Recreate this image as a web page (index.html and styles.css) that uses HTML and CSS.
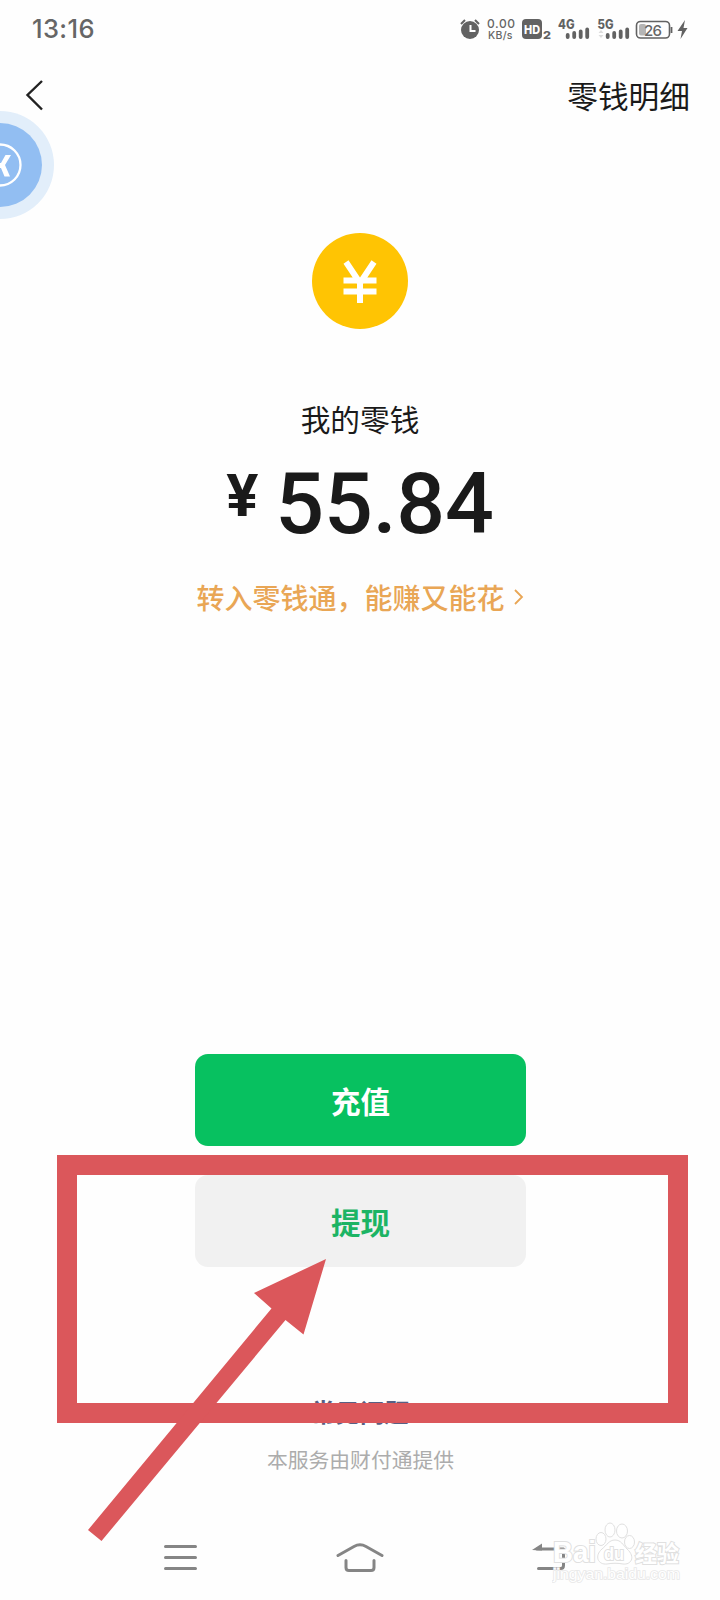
FILE: index.html
```html
<!DOCTYPE html>
<html lang="zh-CN">
<head>
<meta charset="utf-8">
<title>我的零钱</title>
<link rel="stylesheet" href="styles.css">
</head>
<body>
<div class="screen">
  <div class="status">
    <span class="time">13:16</span>
    <svg class="status-icons" width="240" height="36" viewBox="0 0 240 36">
      <circle cx="20" cy="20" r="9" fill="#626262"/>
      <path d="M11 14l4-4M29 14l-4-4" stroke="#626262" stroke-width="2"/>
      <path d="M20.500 15v6h5" fill="none" stroke="#fff" stroke-width="2"/>
      <text x="37" y="18" class="tiny" font-size="12" textLength="28">0.00</text>
      <text x="38" y="28.500" class="tiny" font-size="10.500" textLength="24.500">KB/s</text>
      <rect x="72" y="9" width="20" height="20" rx="4" fill="#626262"/>
      <text x="74" y="23.500" fill="#fff" class="heavy" font-size="12" textLength="16" lengthAdjust="spacingAndGlyphs">HD</text>
      <text x="93" y="28.500" class="heavy" font-size="11" textLength="8" lengthAdjust="spacingAndGlyphs">2</text>
      <text x="108" y="18.500" class="heavy" font-size="12.500" textLength="16.500" lengthAdjust="spacingAndGlyphs">4G</text>
      <text x="147.500" y="18.500" class="heavy" font-size="12.500" textLength="16" lengthAdjust="spacingAndGlyphs">5G</text>
      <path d="M117.700 25v2M124.200 23v4M130.700 21.500v5.500M137.200 19.500v7.500M157.700 25v2M164.200 23v4M170.700 21.500v5.500M177.200 19.500v7.500" stroke="#626262" stroke-width="3.800" stroke-linecap="round"/>
      <path d="M148.500 23l2.500-3 2.500 3zM148.500 25l2.500 3 2.500-3z" fill="#ddd"/>
      <rect x="186.500" y="11.500" width="33" height="16.500" rx="4" fill="none" stroke="#626262" stroke-width="1.600"/>
      <rect x="189" y="14" width="7" height="11.500" rx="2" fill="#b5b5b5"/>
      <path d="M221.500 17v6" stroke="#626262" stroke-width="1.800"/>
      <text x="194" y="25.500" class="tiny" font-size="15" textLength="18">26</text>
      <path d="M235 10l-7.500 11h4.500l-1.500 8 7-11h-4z" fill="#626262"/>
    </svg>
  </div>
  <div class="header">
    <svg width="20" height="34" viewBox="0 0 20 34"><path d="M17 3 2.500 17 17 31.500" fill="none" stroke="#222" stroke-width="2.400"/></svg>
    <span>零钱明细</span>
  </div>
  <div class="balance">
    <svg class="coin" width="98" height="98" viewBox="0 0 98 98">
      <circle cx="49" cy="49" r="48" fill="#ffc403"/>
      <path d="M35 30 49 51 63 30M49 49v22M32.500 48.500h33M32.500 59.500h33" fill="none" stroke="#fff" stroke-width="6"/>
    </svg>
    <div class="label">我的零钱</div>
    <div class="amount"><span class="yen">¥</span><span class="num">55.84</span></div>
    <div class="promo">转入零钱通，能赚又能花<svg width="12" height="18" viewBox="0 0 12 18"><path d="M2 2l7 7-7 7" fill="none" stroke="#e9a655" stroke-width="1.800"/></svg></div>
  </div>
  <div class="actions">
    <div class="btn primary">充值</div>
    <div class="btn">提现</div>
  </div>
  <div class="foot">
    <div class="faq">常见问题</div>
    <div class="provider">本服务由财付通提供</div>
  </div>
  <div class="nav">
    <svg width="36" height="30" viewBox="0 0 36 30"><path d="M3.500 4.500h30M3.500 15.500h30M3.500 26.500h30" class="navline"/></svg>
    <svg class="home" width="50" height="34" viewBox="0 0 50 34"><path d="M3 13.500 19 4.500Q25 1.200 31 4.500L47 13.500M11 18.500v7q0 3 3 3h22q3 0 3-3v-7" class="navline"/></svg>
    <svg width="38" height="34" viewBox="0 0 38 34"><path d="M6 7h26.500v16.500q0 3-3 3H7.500" class="navline"/><path d="M1 8 11 1.500v7z" fill="#858585"/></svg>
  </div>

  <svg class="bubble" width="56" height="112" viewBox="0 0 56 112">
    <circle cx="0" cy="56" r="54" fill="#e2eefa"/>
    <circle cx="0" cy="56" r="42" fill="#92bef2"/>
    <circle cx="0" cy="56" r="20.500" fill="none" stroke="#fff" stroke-width="2.300"/>
    <path d="M-1 54h2L5.500 46H11L5 56l5 11.500H4.500L1 59h-2z" fill="#fff"/>
  </svg>

  <svg class="watermark" width="134" height="66" viewBox="0 0 134 66">
    <g fill="#fff" stroke="#e0e0e0" stroke-width="1">
      <text x="1" y="41" class="logo" font-size="29" textLength="43" lengthAdjust="spacingAndGlyphs">Bai</text>
      <ellipse cx="49" cy="18" rx="5" ry="6.500"/><ellipse cx="58" cy="9" rx="5" ry="7"/><ellipse cx="70" cy="10" rx="5.500" ry="7"/><ellipse cx="77.500" cy="21" rx="5" ry="6.500"/>
      <path d="M63 19c6 0 8 5 12 9 9 8 4 16-4 15-5-1-11-1-16 0-9 1-13-8-5-15 5-4 7-9 13-9z"/>
      <text x="52" y="39" class="logo" font-size="18" textLength="20" lengthAdjust="spacingAndGlyphs">du</text>
      <text x="83" y="40.500" class="logo" font-size="23" textLength="44" lengthAdjust="spacingAndGlyphs">经验</text>
    </g>
    <text x="1" y="58" class="site" font-size="15" textLength="127" lengthAdjust="spacingAndGlyphs">jingyan.baidu.com</text>
  </svg>

  <div class="frame"></div>
  <svg class="arrow" width="250" height="290" viewBox="0 0 250 290">
    <path d="M246 9 223.500 84.500 205.500 70 21.500 291 8 280 191.500 58.500 174 43z" fill="#db575b"/>
  </svg>
</div>
</body>
</html>
```
FILE: styles.css
```css
* { box-sizing: border-box; }
body { margin: 0; background: #fefefe; }
svg { display: block; flex: none; }
.screen {
  position: relative; width: 720px; height: 1600px; overflow: hidden;
  display: flex; flex-direction: column; background: #fefefe; color: #1a1a1a;
  font-family: "Noto Sans CJK SC", sans-serif; white-space: nowrap;
}
.status { height: 60px; padding: 11px 30px 0 32px; display: flex; justify-content: space-between; }
.time { font: 500 25.5px/36px Inter, sans-serif; letter-spacing: .4px; color: #666; }
.status-icons { margin-top: -1px; }
.tiny { font-family: Inter, sans-serif; font-weight: 500; fill: #666; }
.heavy { font-family: Inter, sans-serif; font-weight: 800; }
.heavy:not([fill]) { fill: #626262; }
.header {
  height: 70px; padding: 0 30px 0 25px; display: flex; align-items: center;
  justify-content: space-between; font-size: 30.7px; line-height: 40px;
}
.balance { display: flex; flex-direction: column; align-items: center; padding-top: 102px; }
.coin { margin-right: 1px; }
.label { margin: 67px 0 0 0; font-size: 29.7px; line-height: 44px; }
.amount { display: flex; align-items: flex-start; margin: 20px 0 0 0; height: 79px; font-family: Roboto, sans-serif; font-weight: 500; }
.yen { font-size: 60px; line-height: 70px; width: 49px; font-weight: 700; }
.num { font-size: 86px; line-height: 86px; letter-spacing: -.2px; }
.promo { display: flex; align-items: center; gap: 8px; margin: 35px 0 0 1px; font-size: 28px; line-height: 44px; font-weight: 500; color: #e9a655; }
.actions { display: flex; flex-direction: column; align-items: center; gap: 29px; margin-top: 435px; padding-left: 1px; }
.btn {
  width: 331px; height: 92px; border-radius: 13px; background: #f1f1f1; color: #1cb464;
  font-size: 29.5px; font-weight: 700; line-height: 92px; text-align: center;
}
.btn.primary { background: #07c160; color: #fff; }
.foot { display: flex; flex-direction: column; align-items: center; margin-top: 127px; }
.faq { font-size: 24.5px; line-height: 36px; font-weight: 700; color: #576083; }
.provider { font-size: 20.8px; line-height: 32px; margin: 13px 0 0 1px; color: #acacac; }
.nav { display: flex; justify-content: space-between; padding: 0 151px 0 162px; margin-top: 67px; }
.home { margin-right: 9px; }
.navline { fill: none; stroke: #858585; stroke-width: 3; stroke-linecap: round; stroke-linejoin: round; }
.bubble { position: absolute; left: 0; top: 109px; }
.watermark { position: absolute; left: 552px; top: 1521px; }
.logo { font-family: "Liberation Sans", "Noto Sans CJK SC", sans-serif; font-weight: 700; stroke-width: 2px; paint-order: stroke; }
.site { font-family: "Liberation Sans", sans-serif; fill: #fff; stroke: #e8e8e8; stroke-width: 1.6px; paint-order: stroke; }
.frame { position: absolute; left: 57px; top: 1155px; width: 631px; height: 268px; border: 20px solid #db575b; }
.arrow { position: absolute; left: 80px; top: 1250px; overflow: visible; }
```
